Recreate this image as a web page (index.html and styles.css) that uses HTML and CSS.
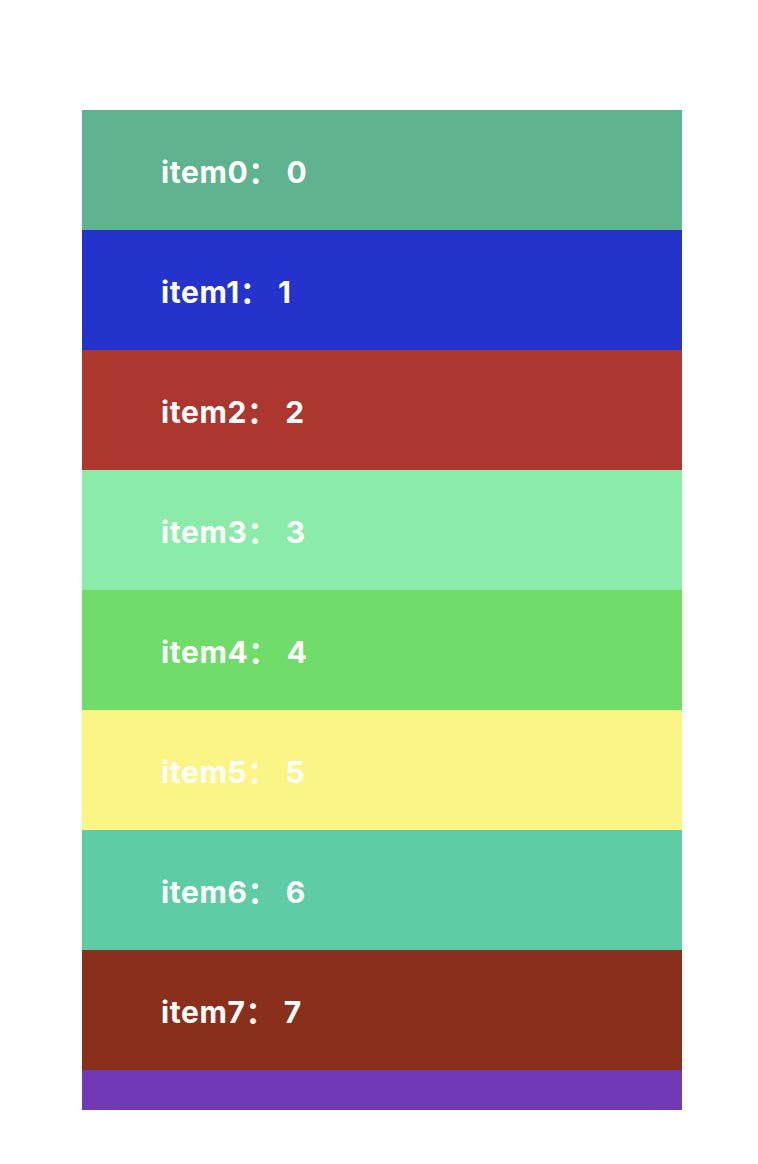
FILE: index.html
```html
<!DOCTYPE html>
<html>
<head>
<meta charset="utf-8">
<link rel="stylesheet" href="styles.css">
</head>
<body>
<div class="list">
  <div class="item c0">item0： 0</div>
  <div class="item c1">item1： 1</div>
  <div class="item c2">item2： 2</div>
  <div class="item c3">item3： 3</div>
  <div class="item c4">item4： 4</div>
  <div class="item c5">item5： 5</div>
  <div class="item c6">item6： 6</div>
  <div class="item c7">item7： 7</div>
  <div class="item c8">item8： 8</div>
</div>
</body>
</html>
```
FILE: styles.css
```css
html, body { margin: 0; padding: 0; background: #fff; }
body { padding-top: 110px; }
.list {
  width: 600px;
  height: 1000px;
  margin-left: 82px;
  overflow: hidden;
}
.item {
  height: 120px;
  line-height: 124px;
  padding-left: 79px;
  color: #fff;
  font-family: Inter, "Noto Sans CJK SC", sans-serif;
  font-weight: 700;
  font-size: 30px;
  letter-spacing: 0.6px;
  white-space: nowrap;
}
.c0 { background: #5fb38f; }
.c1 { background: #2433cc; }
.c2 { background: #ab372f; }
.c3 { background: #8beba9; }
.c4 { background: #70dd6a; }
.c5 { background: #fbf585; }
.c6 { background: #5ecda5; }
.c7 { background: #8b2f1d; }
.c8 { background: #7139b6; }
```
